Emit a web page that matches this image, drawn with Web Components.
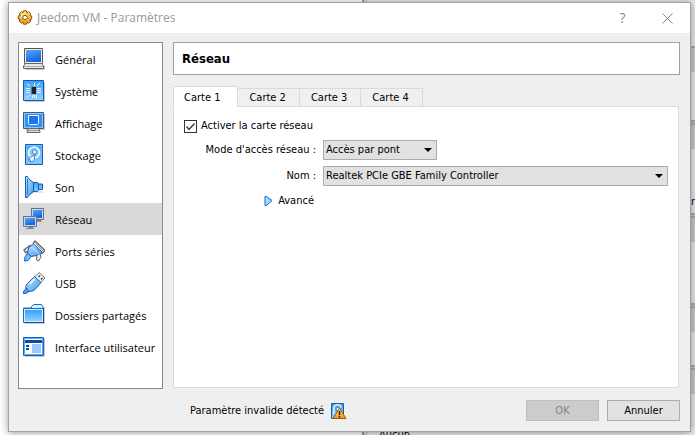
<!DOCTYPE html>
<html lang="fr">
<head>
<meta charset="utf-8">
<title>Jeedom VM - Paramètres</title>
<style>
  :root {
    --ui: "DejaVu Sans Condensed", "DejaVu Sans", Tahoma, sans-serif;
    --segoe: "Open Sans", "Segoe UI", "Noto Sans", sans-serif;
    --face: #efefef;
    --line: #dadada;
  }
  body { margin: 0; display: grid; grid-template: minmax(0, 1fr) / minmax(0, 1fr); height: 100vh; overflow: hidden; background: #e6e6e6; font: 11px/16px var(--ui); color: #000; }
  vm-backdrop, vm-dialog { grid-area: 1 / 1; }
</style>
</head>
<body>
<vm-backdrop></vm-backdrop>
<vm-dialog heading="Jeedom VM - Paramètres">
  <vm-categories slot="nav">
    <vm-category icon="general">Général</vm-category>
    <vm-category icon="system">Système</vm-category>
    <vm-category icon="display">Affichage</vm-category>
    <vm-category icon="storage">Stockage</vm-category>
    <vm-category icon="audio">Son</vm-category>
    <vm-category icon="network" selected>Réseau</vm-category>
    <vm-category icon="serial">Ports séries</vm-category>
    <vm-category icon="usb">USB</vm-category>
    <vm-category icon="folder">Dossiers partagés</vm-category>
    <vm-category icon="interface">Interface utilisateur</vm-category>
  </vm-categories>
  <vm-page-title>Réseau</vm-page-title>
  <vm-tabs tabs="Carte 1|Carte 2|Carte 3|Carte 4">
    <vm-check checked>Activer la carte réseau</vm-check>
    <vm-field label="Mode d'accès réseau :" options="Accès par pont|NAT|Réseau interne" compact></vm-field>
    <vm-field label="Nom :" options="Realtek PCIe GBE Family Controller"></vm-field>
    <vm-expander>Avancé</vm-expander>
  </vm-tabs>
  <vm-status slot="status">Paramètre invalide détecté</vm-status>
  <vm-button slot="actions" disabled>OK</vm-button>
  <vm-button slot="actions">Annuler</vm-button>
</vm-dialog>

<script>
const define = (name, html, setup) => {
  const template = document.createElement('template');
  template.innerHTML = html;
  customElements.define(name, class extends HTMLElement {
    connectedCallback() {
      if (this.shadowRoot) return;
      this.attachShadow({ mode: 'open' }).append(template.content.cloneNode(true));
      if (setup) setup(this, this.shadowRoot);
    }
  });
};

const GRADS = `<defs>
<linearGradient id="scr" x1="0" y1="0" x2="0.4" y2="1"><stop offset="0" stop-color="#58a8fa"/><stop offset="1" stop-color="#1566e0"/></linearGradient>
<linearGradient id="lite" x1="0" y1="0" x2="0" y2="1"><stop offset="0" stop-color="#3ba0f4"/><stop offset="1" stop-color="#8fd0ff"/></linearGradient>
<linearGradient id="pale" x1="0" y1="0" x2="1" y2="1"><stop offset="0" stop-color="#c4e6ff"/><stop offset="1" stop-color="#3a9af0"/></linearGradient>
<linearGradient id="gold" x1="0" y1="0" x2="0" y2="1"><stop offset="0" stop-color="#ffe478"/><stop offset="1" stop-color="#e89a10"/></linearGradient>
</defs>`;
const ICONS = {
  general: [22, `<path d="M3 21.500h18.500V17" fill="none" stroke="#c4c4c4"/><path d="M1.500.500h18v15h-18z" fill="#eee" stroke="#555"/><path d="M3 2h15v12H3z" fill="url(#scr)"/><path d="M2.500 15.500l-2 2.500v2.500h20V18l-2-2.500z" fill="#e8e8e8" stroke="#666"/><path d="M1 18.500h19" stroke="#aaa"/>`],
  system: [22, `<path d="M2 21.500h19.500V2" fill="none" stroke="#c4c4c4"/><path d="M.5.500h20v20H.5z" fill="url(#lite)" stroke="#0f5cb8"/><path d="M8 7h5v7H8z" fill="#222"/><path d="M8 7h1v7H8z" fill="#777"/><path d="M3 8.500h4M3 10.500h4M3 12.500h4M14 8.500h4M14 10.500h4M14 12.500h4M9.500 18v-3M11.500 18v-3M13.500 18v-3M11.500 6V3M14 6l3-3M4 4l3 2M4 17.500l3-3" stroke="#e6f6ff" fill="none"/>`],
  display: [22, `<path d="M2 17.500h19.500V2" fill="none" stroke="#c4c4c4"/><path d="M.5.500h20v16H.5z" fill="#8cc4f8" stroke="#3d5c80"/><path d="M2 2h17v13H2z" fill="#3391f6"/><path d="M5.500 3.500h10v8l-1 1h-8l-1-1z" fill="#1f74e8" stroke="#e8f5ff"/><path d="M5.500 16.500h10l1.500 3v1H4v-1z" fill="#ddd" stroke="#666"/><path d="M5 18.500h11" stroke="#999"/>`],
  storage: [22, `<path d="M2.500.500h17v20h-17z" fill="url(#lite)" stroke="#0f5cb8"/><path d="M3.500 1.500h15v18h-15z" fill="none" stroke="#7cc2fb"/><circle cx="11" cy="8.500" r="5.500" fill="#8cc8f8" stroke="#f2faff" stroke-width="1.700"/><circle cx="11.500" cy="8" r="2" fill="#fff" stroke="#3a82c8"/><path d="M12 10.500l-7 4.500c0 3 4 3.500 6 1.500z" fill="#f4faff" stroke="#4a80b8"/><path d="M6 15.500l2 1" stroke="#1764bd"/>`],
  audio: [22, `<path d="M5 20.500l6-4.500h9" fill="none" stroke="#ccc"/><path d="M10 6.500h4.500l1.500 1.500h3.500v5.500H16L14.500 15.500H10z" fill="url(#lite)" stroke="#145fb4"/><path d="M2.500.500h2c1 3 4 4.500 6 6v9c-2 1.500-5 3-6 6h-2z" fill="url(#pale)" stroke="#145fb4"/><path d="M4.500 3v15.500" stroke="#2079d6"/><path d="M15.500 8v6" stroke="#145fb4"/>`],
  network: [22, `<path d="M10 13.500h9" stroke="#999"/><path d="M8.500.500h12v11h-12z" fill="#c8d8ea" stroke="#64748a"/><path d="M10 2h9v8h-9z" fill="url(#scr)"/><path d="M13 12.500h5" stroke="#777"/><path d="M.5 8.500h13v10H.5z" fill="#c8d8ea" stroke="#64748a"/><path d="M2 10h10v7H2z" fill="url(#scr)"/><path d="M5 19.500h5M3 20.500h8" stroke="#888"/>`],
  serial: [22, `<path d="M7.500 5L1 10l1.500 2.500L5 11M10 3.500l2-2.500 10 9.500-3.500 3.500" fill="#eee" stroke="#666" stroke-width="1.300"/><path d="M12.500 3.500l7.500 7.500" stroke="#999"/><path d="M10.500 4L19 12l-2.500 3L8 16.500 4.500 13l1.500-6z" fill="url(#pale)" stroke="#145fb4"/><path d="M9 7.500l6 6" stroke="#dff2ff"/><path d="M17 14l1 3-2.500 4-2-1 .5-4" fill="#eee" stroke="#666"/><path d="M4.500 13L2 17l-.5 4L5 20.500 8 16.500z" fill="#6cc2ff" stroke="#145fb4"/>`],
  usb: [22, `<path d="M11.500 5L16 .5 22 6l-4.500 5z" fill="#f4f4f4" stroke="#777"/><path d="M15.500 5L17 3.500M18 7.500L19.500 6" stroke="#444" stroke-width="1.500"/><path d="M11.500 4.500l6.500 6-6 7c-2.500 2-5 2-7.500 2C1.500 16.500 3 13 4.500 11.500z" fill="url(#pale)" stroke="#145fb4"/><path d="M3.500 16L.5 19.500v2h2L6 19.500z" fill="#44a6f4" stroke="#145fb4"/><path d="M6.500 12l5-5" stroke="#e4f5ff" stroke-width="2"/>`],
  folder: [22, `<path d="M2 19.500h19.500V3" fill="none" stroke="#ccc"/><path d="M8.500 4V2.500l2-2h8l1.500 2V4h.5v14.500H.500V4z" fill="#d4efff" stroke="#1670c8"/><path d="M2 6h17v11H2z" fill="url(#lite)"/><path d="M1 4.500h19" stroke="#1670c8"/><path d="M1 18.500h19.500V4" fill="none" stroke="#0d4f9f"/>`],
  interface: [22, `<path d="M2 20.500h19.500V2" fill="none" stroke="#ccc"/><path d="M.5 1.500h20v18H.5z" fill="#fff" stroke="#1364bf"/><path d="M1.500 2.500h18v16h-18z" fill="none" stroke="#5aaaf4"/><path d="M2 4h17v3H2zM3 9h3v2H3zM3 12h3v2H3z" fill="#0b4aa2"/><path d="M9 8h9v9H9z" fill="#9cc8ff"/>`],
  gear: [16, `<path d="M6.5.8h3l.4 2 1.700-1.100 2.200 2.200-1.100 1.700 2 .4v3l-2 .4 1.100 1.700-2.200 2.200-1.700-1.100-.4 2h-3l-.4-2-1.700 1.100-2.200-2.200 1.100-1.700-2-.4V6l2-.4-1.100-1.700 2.200-2.200 1.700 1.100z" fill="url(#gold)" stroke="#8a5410"/><circle cx="8" cy="7.500" r="2.200" fill="#fff" stroke="#8a5410"/><path d="M4 7a4 4 0 0 1 4-3.500" fill="none" stroke="#fff5bd"/>`],
  warning: [16, `<path d="M.5.500h12v15H.5z" fill="url(#lite)" stroke="#145fb4"/><path d="M3 11V6a3.500 3.500 0 0 1 7-1.500" fill="none" stroke="#e9f6ff" stroke-width="1.500"/><circle cx="7" cy="6" r="2" fill="#fff" stroke="#3a78b8"/><path d="M8.500 5l6.500 10.500H2z" fill="url(#gold)" stroke="#a85614"/><path d="M8.500 8v4M8.500 13v1.500" stroke="#222" stroke-width="1.500"/>`]
};

define('vm-icon', `<style>:host{display:block;flex:none;line-height:0}</style>`, (el, root) => {
  const [size, art] = ICONS[el.getAttribute('name')];
  const holder = document.createElement('span');
  holder.innerHTML = `<svg width="${size}" height="${size}" viewBox="0 0 ${size} ${size}" aria-hidden="true">${GRADS}${art}</svg>`;
  root.append(holder.firstChild);
});

define('vm-backdrop', `<style>
  :host { display: grid; grid-template-columns: 364px 1fr; min-width: 0; min-height: 0; overflow: hidden; background: #e6e6e6; }
  .left { background: #fff; border-right: 2px solid #999; }
  .right { display: flex; flex-direction: column; background: #e8e8e8; border-left: 4px solid #d8d8d8; overflow: hidden; }
  .bar { flex: none; height: 24px; margin-bottom: 48px; border-top: 2px solid #aaa; background: #cacaca; }
  .bar.double { border-top: 5px double #aaa; }
  .bar.tall { margin-bottom: 61px; }
  .bar.low { margin-bottom: 33px; }
  .gap { flex: none; height: 46px; }
  .end { display: flex; justify-content: flex-end; height: 16px; margin: -3px 0 3px; color: #000080; }
  .foot { height: 16px; padding-left: 11px; background: #eee; }
</style>
<div class="left"></div>
<div class="right"><div class="gap"></div><div class="bar"></div><div class="bar double"></div><div class="end">or</div><div class="bar double tall"></div><div class="bar double low"></div><div class="bar double low"></div><div class="foot">Aucun</div></div>`);

define('vm-dialog', `<style>
  :host { display: flex; flex-direction: column; z-index: 1; min-width: 0; min-height: 0; margin: 2px 4px 3px 8px; border: 1px solid #a0a0a0; background: var(--face); box-shadow: 0 1px 8px rgba(0,0,0,.4); }
  header { display: flex; align-items: center; flex: none; height: 30px; padding-left: 8px; background: #fff; color: #999; font: 12px/16px var(--segoe); }
  h1 { flex: 1; margin: 0 0 0 4px; font: inherit; }
  header button { display: grid; place-items: center; width: 45px; height: 28px; padding: 0; border: 0; background: none; color: #888; font: 14px/16px var(--segoe); }
  main { display: grid; grid-template: minmax(0, 1fr) / 145px minmax(0, 1fr); gap: 10px; flex: 1; min-height: 0; padding: 9px 10px 0 9px; }
  section { display: flex; flex-direction: column; min-width: 0; }
  footer { display: flex; align-items: center; gap: 8px; flex: none; height: 42px; padding: 0 10px 0 181px; }
  .space { flex: 1; }
</style>
<header><vm-icon name="gear"></vm-icon><h1></h1><button aria-label="Aide">?</button><button aria-label="Fermer"><svg width="11" height="11" viewBox="0 0 11 11"><path d="M.5.500l10 10M10.500.500l-10 10" stroke="#888"/></svg></button></header>
<main><slot name="nav"></slot><section><slot></slot></section></main>
<footer><slot name="status"></slot><span class="space"></span><slot name="actions"></slot></footer>`,
(el, root) => { root.querySelector('h1').textContent = el.getAttribute('heading'); });

define('vm-categories', `<style>
  :host { display: block; min-height: 0; border: 1px solid #828790; background: #fff; }
</style><nav aria-label="Catégories"><slot></slot></nav>`);

define('vm-category', `<style>
  :host { display: block; }
  button { display: flex; align-items: center; gap: 10px; width: 100%; height: 32px; padding: 0 4px; border: 0; background: none; color: #000; font: 11px/16px var(--segoe); text-align: left; white-space: nowrap; }
  button > span { padding-top: 2px; }
  :host([selected]) button { background: #d9d9d9; }
</style><button><span><slot></slot></span></button>`,
(el, root) => {
  const icon = document.createElement('vm-icon');
  icon.setAttribute('name', el.getAttribute('icon'));
  root.querySelector('button').prepend(icon);
});

define('vm-page-title', `<style>
  :host { display: block; padding: 8px; border: 1px solid #a0a0a0; background: #fff; }
  h2 { margin: 0; font: bold 13px/15px var(--ui); }
</style><h2><slot></slot></h2>`);

define('vm-tabs', `<style>
  :host { display: flex; flex-direction: column; flex: 1; min-height: 0; margin: 11px 1px 1px 0; }
  .strip { display: flex; align-items: flex-end; flex: none; margin-bottom: -1px; }
  button { height: 19px; padding: 0 13px 0 11px; border: 1px solid var(--line); border-left: 0; background: #f0f0f0; color: #000; font: 11px/16px var(--ui); }
  button[aria-selected=true] { z-index: 1; height: 21px; padding: 2px 17px 0 10px; border-left: 1px solid var(--line); border-bottom-color: #fff; background: #fff; }
  .panel { display: flex; flex-direction: column; gap: 6px; flex: 1; padding: 11px 10px; border: 1px solid var(--line); background: #fff; }
</style><div class="strip" role="tablist"></div><div class="panel" role="tabpanel"><slot></slot></div>`,
(el, root) => {
  el.getAttribute('tabs').split('|').forEach((name, i) => {
    const tab = document.createElement('button');
    tab.setAttribute('role', 'tab');
    tab.setAttribute('aria-selected', String(i === 0));
    tab.textContent = name;
    root.querySelector('.strip').append(tab);
  });
});

define('vm-check', `<style>
  :host { display: flex; }
  label { display: flex; align-items: center; gap: 4px; height: 16px; }
  .box { display: grid; }
  input, svg { grid-area: 1 / 1; width: 13px; height: 13px; margin: 0; }
  input { appearance: none; box-sizing: border-box; border: 1px solid #333; background: #fff; }
  svg { z-index: 1; visibility: hidden; pointer-events: none; }
  input:checked + svg { visibility: visible; }
</style><label><span class="box"><input type="checkbox"><svg viewBox="0 0 13 13"><path d="M2.500 6.500l2.500 3 5.500-6" fill="none" stroke="#333" stroke-width="1.300"/></svg></span><span><slot></slot></span></label>`,
(el, root) => { root.querySelector('input').checked = el.hasAttribute('checked'); });

define('vm-field', `<style>
  :host { display: grid; grid-template-columns: 132px minmax(0, 1fr); gap: 7px; align-items: center; }
  label { text-align: right; white-space: nowrap; }
  .box { display: grid; align-items: center; }
  :host([compact]) .box { width: 114px; }
  select, svg { grid-area: 1 / 1; }
  select { appearance: none; box-sizing: border-box; width: 100%; height: 20px; padding: 0 20px 0 2px; border: 1px solid #adadad; border-radius: 0; background: #e1e1e1; color: #000; font: 11px/16px var(--ui); }
  svg { justify-self: end; margin-right: 5px; pointer-events: none; }
</style><label for="choice"></label><span class="box"><select id="choice"></select><svg width="8" height="4" viewBox="0 0 8 4"><path d="M0 0h8L4 4z"/></svg></span>`,
(el, root) => {
  root.querySelector('label').textContent = el.getAttribute('label');
  for (const text of el.getAttribute('options').split('|')) root.querySelector('select').add(new Option(text));
});

define('vm-expander', `<style>
  :host { display: grid; grid-template-columns: 132px; justify-content: start; justify-items: end; padding-top: 1px; }
  button { display: flex; align-items: center; gap: 5px; padding: 0 2px 0 0; border: 0; background: none; color: #000; font: 11px/16px var(--ui); }
</style><button aria-expanded="false"><svg width="9" height="10" viewBox="0 0 9 10"><path d="M1 .500h1.500l5.500 4-5.500 5H1z" fill="#8fd0ff" stroke="#1769c4"/><path d="M3 2.500v5" stroke="#d8f0ff"/></svg><slot></slot></button>`);

define('vm-status', `<style>
  :host { display: flex; align-items: center; gap: 7px; padding-top: 2px; white-space: nowrap; }
</style><span><slot></slot></span><vm-icon name="warning"></vm-icon>`);

define('vm-button', `<style>
  :host { display: block; }
  button { display: block; box-sizing: border-box; width: 73px; height: 21px; padding: 2px 0 0; border: 1px solid #adadad; background: #e1e1e1; color: #000; font: 11px/16px var(--ui); }
  button:disabled { border-color: #bfbfbf; background: #ccc; color: #838383; }
</style><button><slot></slot></button>`,
(el, root) => { root.querySelector('button').disabled = el.hasAttribute('disabled'); });
</script>
</body>
</html>
